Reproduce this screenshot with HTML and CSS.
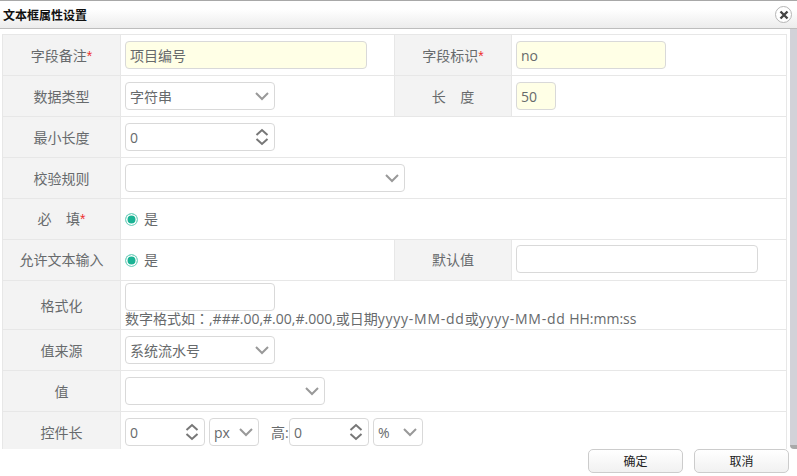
FILE: index.html
```html
<!DOCTYPE html>
<html>
<head>
    <title>文本框属性设置</title>
    <link rel="stylesheet" href="styles.css">
</head>
<body>
    <svg class="defs" width="0" height="0">
        <symbol id="chevron" viewBox="0 0 16 10"><path d="M2 2l6 6 6-6" fill="none" stroke="#999" stroke-width="2"/></symbol>
        <symbol id="spin" viewBox="0 0 16 18"><path d="M2.500 7L8 2l5.500 5M2.500 11L8 16l5.500-5" fill="none" stroke="#777" stroke-width="2"/></symbol>
    </svg>

    <!-- the title bar -->
    <div class="titlebar">
        <span class="title">文本框属性设置</span>
        <span class="close"><svg width="10" height="10" viewBox="0 0 10 10"><path d="M1.500 1.500l7 7M8.500 1.500l-7 7" stroke="#444" stroke-width="2.400"/></svg></span>
    </div>

    <!-- the form -->
    <div class="middle">
        <div class="scroller">
            <table class="form">
                <colgroup><col class="c1"><col class="c2"><col class="c3"><col class="c4"></colgroup>
                <tr>
                    <th>字段备注<i>*</i></th>
                    <td><span class="field w242 req">项目编号</span></td>
                    <th>字段标识<i>*</i></th>
                    <td><span class="field w150 req latin">no</span></td>
                </tr>
                <tr>
                    <th>数据类型</th>
                    <td><span class="field w150">字符串<svg class="chev"><use href="#chevron"/></svg></span></td>
                    <th>长&nbsp;&nbsp;&nbsp;&nbsp;度</th>
                    <td><span class="field w40 req">50</span></td>
                </tr>
                <tr>
                    <th>最小长度</th>
                    <td colspan="3"><span class="field w150">0<svg class="spin"><use href="#spin"/></svg></span></td>
                </tr>
                <tr>
                    <th>校验规则</th>
                    <td colspan="3"><span class="field w280"><svg class="chev"><use href="#chevron"/></svg></span></td>
                </tr>
                <tr class="radio-row">
                    <th>必&nbsp;&nbsp;&nbsp;&nbsp;填<i>*</i></th>
                    <td colspan="3"><span class="radio"></span>是</td>
                </tr>
                <tr class="radio-row">
                    <th>允许文本输入</th>
                    <td><span class="radio"></span>是</td>
                    <th>默认值</th>
                    <td><span class="field w242"></span></td>
                </tr>
                <tr>
                    <th>格式化</th>
                    <td colspan="3" class="format">
                        <span class="field w150"></span>
                        <div class="hint">数字格式如<span class="colon">：</span>,###.00,#.00,#.000,或日期<span class="date">yyyy-MM-dd</span>或<span class="date">yyyy-MM-dd</span> HH:mm:ss</div>
                    </td>
                </tr>
                <tr>
                    <th>值来源</th>
                    <td colspan="3"><span class="field w150">系统流水号<svg class="chev"><use href="#chevron"/></svg></span></td>
                </tr>
                <tr>
                    <th>值</th>
                    <td colspan="3"><span class="field w200"><svg class="chev"><use href="#chevron"/></svg></span></td>
                </tr>
                <tr>
                    <th>控件长</th>
                    <td colspan="3">
                        <div class="size-row">
                            <span class="field w80">0<svg class="spin"><use href="#spin"/></svg></span>
                            <span class="field w50">px<svg class="chev"><use href="#chevron"/></svg></span>
                            <span class="high">高:</span>
                            <span class="field w80">0<svg class="spin"><use href="#spin"/></svg></span>
                            <span class="field w50">%<svg class="chev"><use href="#chevron"/></svg></span>
                        </div>
                    </td>
                </tr>
            </table>
        </div>
        <div class="scrollbar"></div>
    </div>

    <!-- the buttons -->
    <div class="footer">
        <a class="btn" href="#">确定</a>
        <a class="btn" href="#">取消</a>
    </div>
</body>
</html>
```

FILE: styles.css
```css
/* The dialog fills the whole window */
body {
    margin: 0;
    height: 476px;
    overflow: hidden;
    display: flex;
    flex-direction: column;
    background: white;
    color: #676a6c;
    font-family: "Open Sans", "Noto Sans CJK SC", sans-serif;
    font-size: 14px;
}

.defs {
    position: absolute;
}

/* Title bar */
.titlebar {
    box-sizing: border-box;
    height: 29px;
    flex: none;
    display: flex;
    align-items: center;
    justify-content: space-between;
    padding: 0 5px 0 3px;
    border-top: 1px solid #a8a8a8;
    border-bottom: 1px solid #bdbdbd;
    background: linear-gradient(#ffffff 30%, #ececec);
}

.title {
    font-size: 12px;
    font-weight: bold;
    color: #111;
}

.close {
    box-sizing: border-box;
    width: 17px;
    height: 17px;
    display: flex;
    align-items: center;
    justify-content: center;
    border: 1px solid #b5b5b5;
    border-radius: 50%;
    background: white;
}

/* Scrolling part */
.middle {
    height: 420px;
    flex: none;
    display: flex;
}

.scroller {
    width: 790px;
    overflow: hidden;
    padding: 5px 0 0 2px;
    box-sizing: border-box;
}

.scrollbar {
    width: 7px;
    background: #d2d2d8;
    border-bottom: 4px solid #a9a9a9;
    border-radius: 0 0 0 4px;
    box-sizing: border-box;
}

/* The form table */
.form {
    width: 784px;
    table-layout: fixed;
    border-collapse: collapse;
}

.c1 { width: 118px; }
.c2 { width: 274px; }
.c3 { width: 117px; }
.c4 { width: 275px; }

.form th,
.form td {
    border: 1px solid #e7e7e7;
    height: 41px;
    box-sizing: border-box;
    padding: 0 4px;
}

.form th {
    background: #f3f3f3;
    font-weight: normal;
    text-align: center;
}

.form th i {
    color: #ed2f2f;
    font-style: normal;
    font-family: "Liberation Sans", sans-serif;
}

.form .radio-row th,
.form .radio-row td {
    padding-bottom: 2px;
}

/* Inputs and selects */
.field {
    box-sizing: border-box;
    height: 28px;
    display: inline-flex;
    align-items: center;
    justify-content: space-between;
    vertical-align: middle;
    padding: 0 4px;
    border: 1px solid #d9d9d9;
    border-radius: 4px;
    background: white;
    flex: none;
}

.req { background: #ffffe6; }
.w40 { width: 40px; }
.w50 { width: 50px; }
.w80 { width: 80px; }
.w150 { width: 150px; }
.w200 { width: 200px; }
.w242 { width: 242px; }
.w280 { width: 280px; }

.chev {
    width: 16px;
    height: 10px;
    margin-left: auto;
}

.spin {
    width: 16px;
    height: 18px;
    margin-left: auto;
}

/* Radio button */
.radio {
    box-sizing: border-box;
    display: inline-block;
    width: 13px;
    height: 13px;
    margin-right: 6px;
    vertical-align: -2px;
    border: 1px solid #7fd6c4;
    border-radius: 50%;
    background: #1ab394;
    box-shadow: inset 0 0 0 1.500px white;
}

/* Format row */
.form .format {
    vertical-align: top;
    height: 49px;
    padding-top: 2px;
    padding-bottom: 0;
}

.format .field {
    display: flex;
}

.hint {
    height: 18px;
    line-height: 15px;
}

.colon {
    font-family: "Noto Sans CJK TC", sans-serif;
}

.date {
    letter-spacing: 0.75px;
}

/* Size row */
.size-row {
    display: flex;
    align-items: center;
    gap: 4px;
}

.high {
    margin-left: 8px;
    margin-right: -4px;
    width: 18px;
}

/* Footer buttons */
.footer {
    flex: 1;
    display: flex;
    justify-content: flex-end;
    gap: 11px;
    padding-right: 8px;
}

.btn {
    box-sizing: border-box;
    width: 95px;
    height: 24px;
    line-height: 24px;
    text-align: center;
    font-size: 12px;
    color: #222;
    text-decoration: none;
    border: 1px solid #ccc;
    border-radius: 5px;
    background: linear-gradient(#ffffff, #f1f1f1);
}
```
